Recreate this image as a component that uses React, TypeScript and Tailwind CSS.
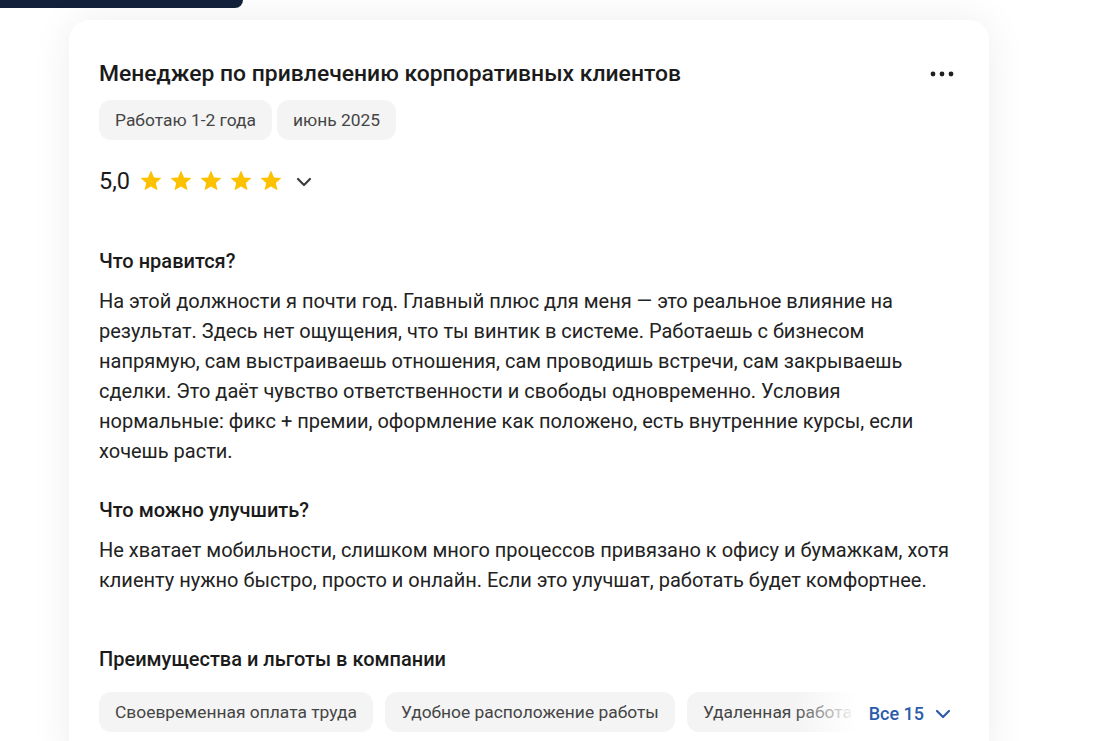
import React from "react";

const Star = () => (
  <svg width="24" height="24" viewBox="0 0 24 24" className="shrink-0">
    <path
      d="M12 1.6l3 6.9 7.4.6-5.6 4.9 1.7 7.3-6.5-3.9-6.5 3.9 1.7-7.3-5.6-4.9 7.4-.6z"
      fill="#fdc100"
    />
  </svg>
);

const Chevron = ({ color = "#3d3d3d" }: { color?: string }) => (
  <svg width="16" height="10" viewBox="0 0 16 10" fill="none">
    <path d="M2 2l6 6 6-6" stroke={color} strokeWidth="2.2" strokeLinecap="round" strokeLinejoin="round" />
  </svg>
);

const benefits = [
  "Своевременная оплата труда",
  "Удобное расположение работы",
  "Удаленная работа",
  "Гибкий график",
];

export default function App() {
  return (
    <div className="min-h-screen bg-white overflow-hidden" style={{ fontFamily: "Roboto, 'Noto Sans', sans-serif" }}>
      <div className="w-[243px] h-2 bg-[#14213b] rounded-br-lg" />

      <div className="ml-[69px] mt-3 w-[920px] rounded-[20px] bg-white shadow-[0_0_40px_rgba(0,0,0,0.07)] px-[30px] pt-10 pb-10">
        <div className="flex items-center justify-between">
          <h2 className="text-[22.9px] leading-7 font-medium text-[#1b1b1b]">
            Менеджер по привлечению корпоративных клиентов
          </h2>
          <button className="mr-[4px]">
            <svg width="26" height="8" viewBox="0 0 26 8">
              <circle cx="4" cy="4" r="2.4" fill="#1f1f1f" />
              <circle cx="13" cy="4" r="2.4" fill="#1f1f1f" />
              <circle cx="22" cy="4" r="2.4" fill="#1f1f1f" />
            </svg>
          </button>
        </div>

        <div className="mt-3 flex gap-[5px]">
          <span className="h-10 px-4 flex items-center rounded-xl bg-[#f4f4f4] text-[17.4px] text-[#454545]">
            Работаю 1-2 года
          </span>
          <span className="h-10 px-4 flex items-center rounded-xl bg-[#f4f4f4] text-[17.4px] text-[#454545]">
            июнь 2025
          </span>
        </div>

        <div className="mt-[25px] h-8 flex items-center">
          <span className="text-[23.5px] leading-8 text-[#1b1b1b] mr-[9px]">5,0</span>
          <div className="flex gap-[6px]">
            <Star />
            <Star />
            <Star />
            <Star />
            <Star />
          </div>
          <span className="ml-[13px] mt-[1px]">
            <Chevron />
          </span>
        </div>

        <h3 className="mt-[50px] text-xl leading-7 font-medium text-[#1b1b1b]">Что нравится?</h3>
        <p className="mt-[11px] text-xl leading-[30px] text-[#222222]">
          На этой должности я почти год. Главный плюс для меня — это реальное влияние на результат. Здесь нет
          ощущения, что ты винтик в системе. Работаешь с бизнесом напрямую, сам выстраиваешь отношения, сам
          проводишь встречи, сам закрываешь сделки. Это даёт чувство ответственности и свободы одновременно.
          Условия нормальные: фикс + премии, оформление как положено, есть внутренние курсы, если хочешь расти.
        </p>

        <h3 className="mt-[30px] text-xl leading-7 font-medium text-[#1b1b1b]">Что можно улучшить?</h3>
        <p className="mt-[11px] text-xl leading-[30px] text-[#222222]">
          Не хватает мобильности, слишком много процессов привязано к офису и бумажкам, хотя клиенту нужно
          быстро, просто и онлайн. Если это улучшат, работать будет комфортнее.
        </p>

        <h3 className="mt-[50px] text-xl leading-7 font-medium text-[#1b1b1b]">
          Преимущества и льготы в компании
        </h3>
        <div className="mt-[19px] flex items-center">
          <div className="relative flex-1 overflow-hidden">
            <div className="flex gap-3 whitespace-nowrap">
              {benefits.map((b) => (
                <span
                  key={b}
                  className="h-10 px-4 flex items-center shrink-0 rounded-xl bg-[#f4f4f4] text-[17.4px] text-[#454545]"
                >
                  {b}
                </span>
              ))}
            </div>
            <div className="absolute right-0 top-0 h-full w-16 bg-gradient-to-r from-transparent to-white" />
          </div>
          <button className="ml-[13px] mt-[3px] flex items-center gap-[11px] pr-2 text-lg font-medium text-[#2b5cab]">
            Все 15
            <Chevron color="#2b5cab" />
          </button>
        </div>
      </div>
    </div>
  );
}
